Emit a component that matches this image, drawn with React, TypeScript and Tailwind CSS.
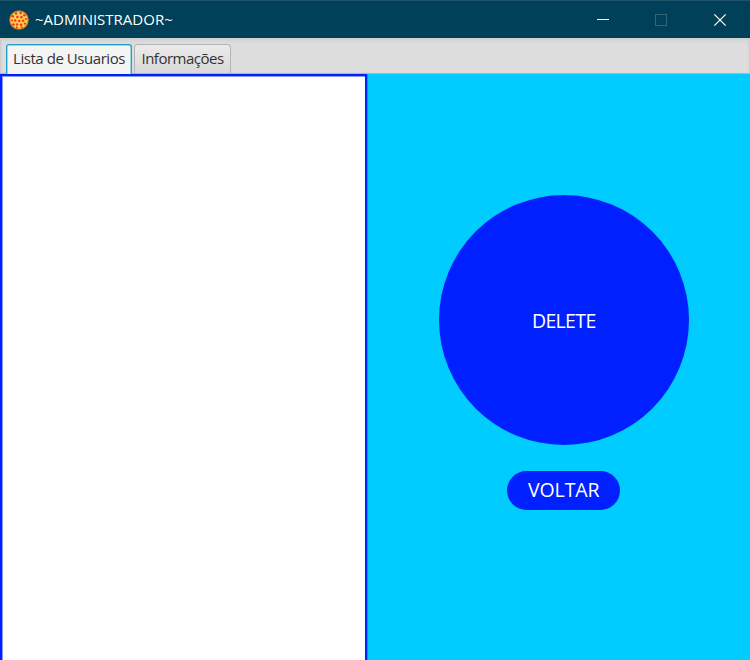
import React from "react";

function PizzaIcon() {
  return (
    <svg width="20" height="20" viewBox="0 0 20 20" className="block shrink-0">
      <circle cx="10" cy="10" r="9.8" fill="#d9782a" />
      <circle cx="10" cy="10" r="8.6" fill="#ffd24c" />
      <g fill="#f0352a">
        <circle cx="7" cy="3.4" r="1.25" />
        <circle cx="11.6" cy="3" r="1.25" />
        <circle cx="15.3" cy="5.2" r="1.25" />
        <circle cx="3.8" cy="6.3" r="1.3" />
        <circle cx="8.4" cy="7" r="1.3" />
        <circle cx="12.4" cy="7.2" r="1.3" />
        <circle cx="17" cy="9" r="1.1" />
        <circle cx="3" cy="10.5" r="1.1" />
        <circle cx="6.2" cy="10.5" r="1.3" />
        <circle cx="10.2" cy="11" r="1.3" />
        <circle cx="14" cy="10.8" r="1.3" />
        <circle cx="4.3" cy="14.6" r="1.3" />
        <circle cx="8" cy="14.4" r="1.2" />
        <circle cx="12" cy="14.8" r="1.3" />
        <circle cx="16" cy="13.6" r="1.2" />
        <circle cx="7.8" cy="17.2" r="1" />
        <circle cx="12.6" cy="17.3" r="1" />
      </g>
    </svg>
  );
}

function TitleBar() {
  return (
    <header className="flex h-[38px] items-center border-t border-[#1f5468] bg-[#004058] pl-[9px] text-white">
      <PizzaIcon />
      <h1 className="ml-[6px] pb-[2px] text-[15px] leading-5 whitespace-nowrap">~ADMINISTRADOR~</h1>
      <div className="ml-auto flex">
        <svg width="58" height="36" viewBox="0 0 58 36" className="block">
          <path d="M23 17.5h12" stroke="#fff" fill="none" />
        </svg>
        <svg width="58" height="36" viewBox="0 0 58 36" className="block">
          <path d="M23.5 12.5h11v11h-11z" stroke="#336679" fill="none" />
        </svg>
        <svg width="60" height="36" viewBox="0 0 60 36" className="block">
          <path d="M24.3 12.3l11.4 11.4M35.7 12.3L24.3 23.7" stroke="#fff" strokeWidth="1.2" fill="none" />
        </svg>
      </div>
    </header>
  );
}

function TabBar() {
  return (
    <nav className="flex h-[36px] items-end gap-[2px] border-b border-[#b5b5b5] bg-[#dddddd] pl-[6px] text-[15px] leading-5 text-[#323232] shadow-[inset_0_4px_4px_-2px_#cccccc,inset_-2px_0_2px_-1px_#c8c8c8,inset_2px_0_2px_-1px_#c8c8c8]">
      <button className="-mb-px flex h-[30px] w-[126px] items-center justify-center rounded-t-[3px] border-x-[1.5px] border-t border-[#249fc9] bg-[#f4f4f4] pb-[3px] whitespace-nowrap shadow-[inset_0_1px_0_#9fd3e6,inset_1px_0_0_#9fd3e6,inset_-1px_0_0_#9fd3e6]">
        <span className="tracking-[-0.45px]">Lista de Usuarios</span>
      </button>
      <button className="flex h-[29px] w-[97px] items-center justify-center rounded-t-[4px] border border-b-0 border-[#b5b5b5] bg-linear-to-b from-[#ebebeb] to-[#d9d9d9] pb-[2px] whitespace-nowrap">
        <span className="tracking-[-0.5px]">Informações</span>
      </button>
    </nav>
  );
}

export default function App() {
  return (
    <div className="flex h-[660px] w-[750px] flex-col overflow-hidden font-['Open_Sans','Noto_Sans',sans-serif]">
      <TitleBar />
      <TabBar />
      <main className="flex min-h-0 flex-1 bg-[#00ccff]">
        <section className="w-[367px] border-x-[2px] border-t-[2px] border-[#0020ff] bg-white shadow-[inset_1px_1px_0_#8c9aff,1px_0_0_#0099ff]" />
        <section className="flex flex-1 flex-col items-center pt-[121px] pl-[10.5px] text-white">
          <button className="flex size-[250px] items-center justify-center rounded-full bg-[#0020ff] pt-[2px] text-[19.5px] font-normal">
            <span className="tracking-[-0.65px]">DELETE</span>
          </button>
          <button className="mt-[26px] flex h-[39px] w-[113px] items-center justify-center rounded-full bg-[#0020ff] pb-[2px] text-[19.5px] font-normal">
            <span className="tracking-[-0.1px]">VOLTAR</span>
          </button>
        </section>
      </main>
    </div>
  );
}
